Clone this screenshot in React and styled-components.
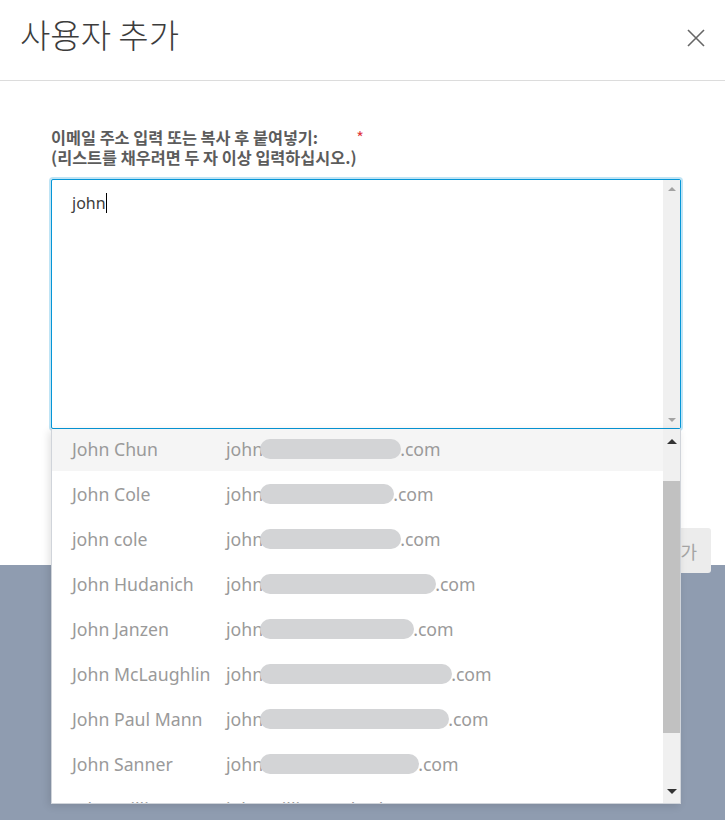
import React from 'react';
import styled, { createGlobalStyle } from 'styled-components';

const GlobalStyle = createGlobalStyle`
  html, body {
    margin: 0;
    padding: 0;
    background: #8f9cb0;
    height: 100%;
  }
  #root {
    height: 100%;
  }
`;

const people = [
  { name: 'John Chun', blur: 141 },
  { name: 'John Cole', blur: 134 },
  { name: 'john cole', blur: 141 },
  { name: 'John Hudanich', blur: 176 },
  { name: 'John Janzen', blur: 154 },
  { name: 'John McLaughlin', blur: 192 },
  { name: 'John Paul Mann', blur: 189 },
  { name: 'John Sanner', blur: 159 },
  { name: 'John Williams', email: 'john.williams@hoth.com' },
];

const Modal = styled.div`
  position: relative;
  height: 565px;
  background: #fff;
  font-family: "Noto Sans CJK KR", "Noto Sans", sans-serif;
`;

const Header = styled.header`
  height: 81px;
  box-sizing: border-box;
  border-bottom: 1px solid #dcdcdc;
  display: flex;
  align-items: center;
  justify-content: space-between;
  padding: 0 17px 12px 20px;
`;

const Title = styled.h1`
  margin: 0;
  font-size: 33px;
  font-weight: 300;
  color: #3c3c3c;
`;

const CloseButton = styled.button`
  border: 0;
  background: none;
  padding: 0;
  width: 24px;
  height: 24px;
  display: flex;
  align-items: center;
  justify-content: center;
  margin-top: 8px;
`;

const Body = styled.div`
  padding: 46px 14px 0 51px;
`;

const Label = styled.label`
  display: block;
  width: 630px;
  font-size: 16.3px;
  line-height: 20px;
  font-weight: 700;
  color: #5c5c5c;
  > span {
    color: #e0393e;
    margin-left: 38px;
    font-weight: 400;
  }
`;

const Field = styled.div`
  position: relative;
  width: 630px;
  margin-top: 12px;
`;

const InputBox = styled.div`
  height: 250px;
  box-sizing: border-box;
  border: 1px solid #0696d7;
  box-shadow: 0 0 0 2px #bfe4f5;
  border-radius: 2px;
  background: #fff;
  display: flex;
`;

const InputText = styled.div`
  flex: 1;
  padding: 12px 20px;
  font-family: "Noto Sans", sans-serif;
  font-size: 16px;
  color: #3c3c3c;
  > i {
    display: inline-block;
    width: 1px;
    height: 20px;
    background: #000;
    vertical-align: -4px;
  }
`;

const ScrollTrack = styled.div`
  width: 17px;
  background: #f0f0f0;
  display: flex;
  flex-direction: column;
  justify-content: space-between;
  align-items: center;
  padding: ${(p) => p.$pad || '0'};
`;

const ArrowCell = styled.div`
  height: 24px;
  display: flex;
  align-items: center;
`;

const Spacer = styled.div`
  flex: 1;
`;

const Thumb = styled.div`
  width: 17px;
  height: 252px;
  background: #c1c1c1;
  margin-top: ${(p) => p.$top}px;
`;

const Arrow = styled.div`
  width: 0;
  height: 0;
  border-left: ${(p) => p.$size}px solid transparent;
  border-right: ${(p) => p.$size}px solid transparent;
  ${(p) => (p.$down ? 'border-top' : 'border-bottom')}: ${(p) => p.$size}px solid ${(p) => p.$color};
`;

const Dropdown = styled.div`
  position: absolute;
  top: 250px;
  left: 0;
  width: 630px;
  height: 375px;
  box-sizing: border-box;
  background: #fff;
  border: 1px solid #d0d4da;
  border-top: 0;
  box-shadow: -2px 2px 8px rgba(0, 0, 0, 0.12);
  display: flex;
  overflow: hidden;
  z-index: 2;
`;

const List = styled.ul`
  flex: 1;
  list-style: none;
  margin: -3px 0 0;
  padding: 0;
`;

const Row = styled.li`
  height: 45px;
  display: flex;
  align-items: center;
  padding-left: 20px;
  background: ${(p) => (p.$active ? '#f5f5f5' : '#fff')};
  font-family: "Noto Sans", sans-serif;
  font-size: 17.7px;
  color: #9a9a9a;
`;

const Name = styled.span`
  width: 154px;
  flex-shrink: 0;
  white-space: nowrap;
`;

const Email = styled.span`
  display: flex;
  align-items: center;
  white-space: nowrap;
`;

const Blur = styled.span`
  display: inline-block;
  height: 20px;
  border-radius: 10px;
  background: #d3d4d6;
  margin: 0 -1px 0 -3px;
`;

const Footer = styled.div`
  display: flex;
  justify-content: flex-end;
  margin-top: 99px;
`;

const Submit = styled.button`
  width: 90px;
  height: 45px;
  border: 0;
  border-radius: 3px;
  background: #ececec;
  color: #a5a5a5;
  font-family: "Noto Sans CJK KR", sans-serif;
  font-size: 18px;
  text-align: right;
  padding-right: 14px;
`;

const CloseIcon = () => (
  <svg width="18" height="18" viewBox="0 0 18 18">
    <path d="M1 1 L17 17 M17 1 L1 17" stroke="#666" strokeWidth="1.6" fill="none" />
  </svg>
);

export default function App() {
  return (
    <>
      <GlobalStyle />
      <Modal>
        <Header>
          <Title>사용자 추가</Title>
          <CloseButton aria-label="닫기">
            <CloseIcon />
          </CloseButton>
        </Header>
        <Body>
          <Label>
            이메일 주소 입력 또는 복사 후 붙여넣기:<span>*</span>
            <br />
            (리스트를 채우려면 두 자 이상 입력하십시오.)
          </Label>
          <Field>
            <InputBox>
              <InputText>
                john<i />
              </InputText>
              <ScrollTrack $pad="7px 0 6px">
                <Arrow $size={4} $color="#a3a3a3" />
                <Arrow $size={4} $color="#a3a3a3" $down />
              </ScrollTrack>
            </InputBox>
            <Dropdown>
              <List>
                {people.map((p, i) => (
                  <Row key={p.name} $active={i === 0}>
                    <Name>{p.name}</Name>
                    <Email>
                      {p.email ? (
                        p.email
                      ) : (
                        <>
                          john
                          <Blur style={{ width: p.blur }} />
                          .com
                        </>
                      )}
                    </Email>
                  </Row>
                ))}
              </List>
              <ScrollTrack>
                <ArrowCell>
                  <Arrow $size={5} $color="#333" />
                </ArrowCell>
                <Thumb $top={28} />
                <Spacer />
                <ArrowCell>
                  <Arrow $size={5} $color="#333" $down />
                </ArrowCell>
              </ScrollTrack>
            </Dropdown>
          </Field>
          <Footer>
            <Submit>추가</Submit>
          </Footer>
        </Body>
      </Modal>
    </>
  );
}
